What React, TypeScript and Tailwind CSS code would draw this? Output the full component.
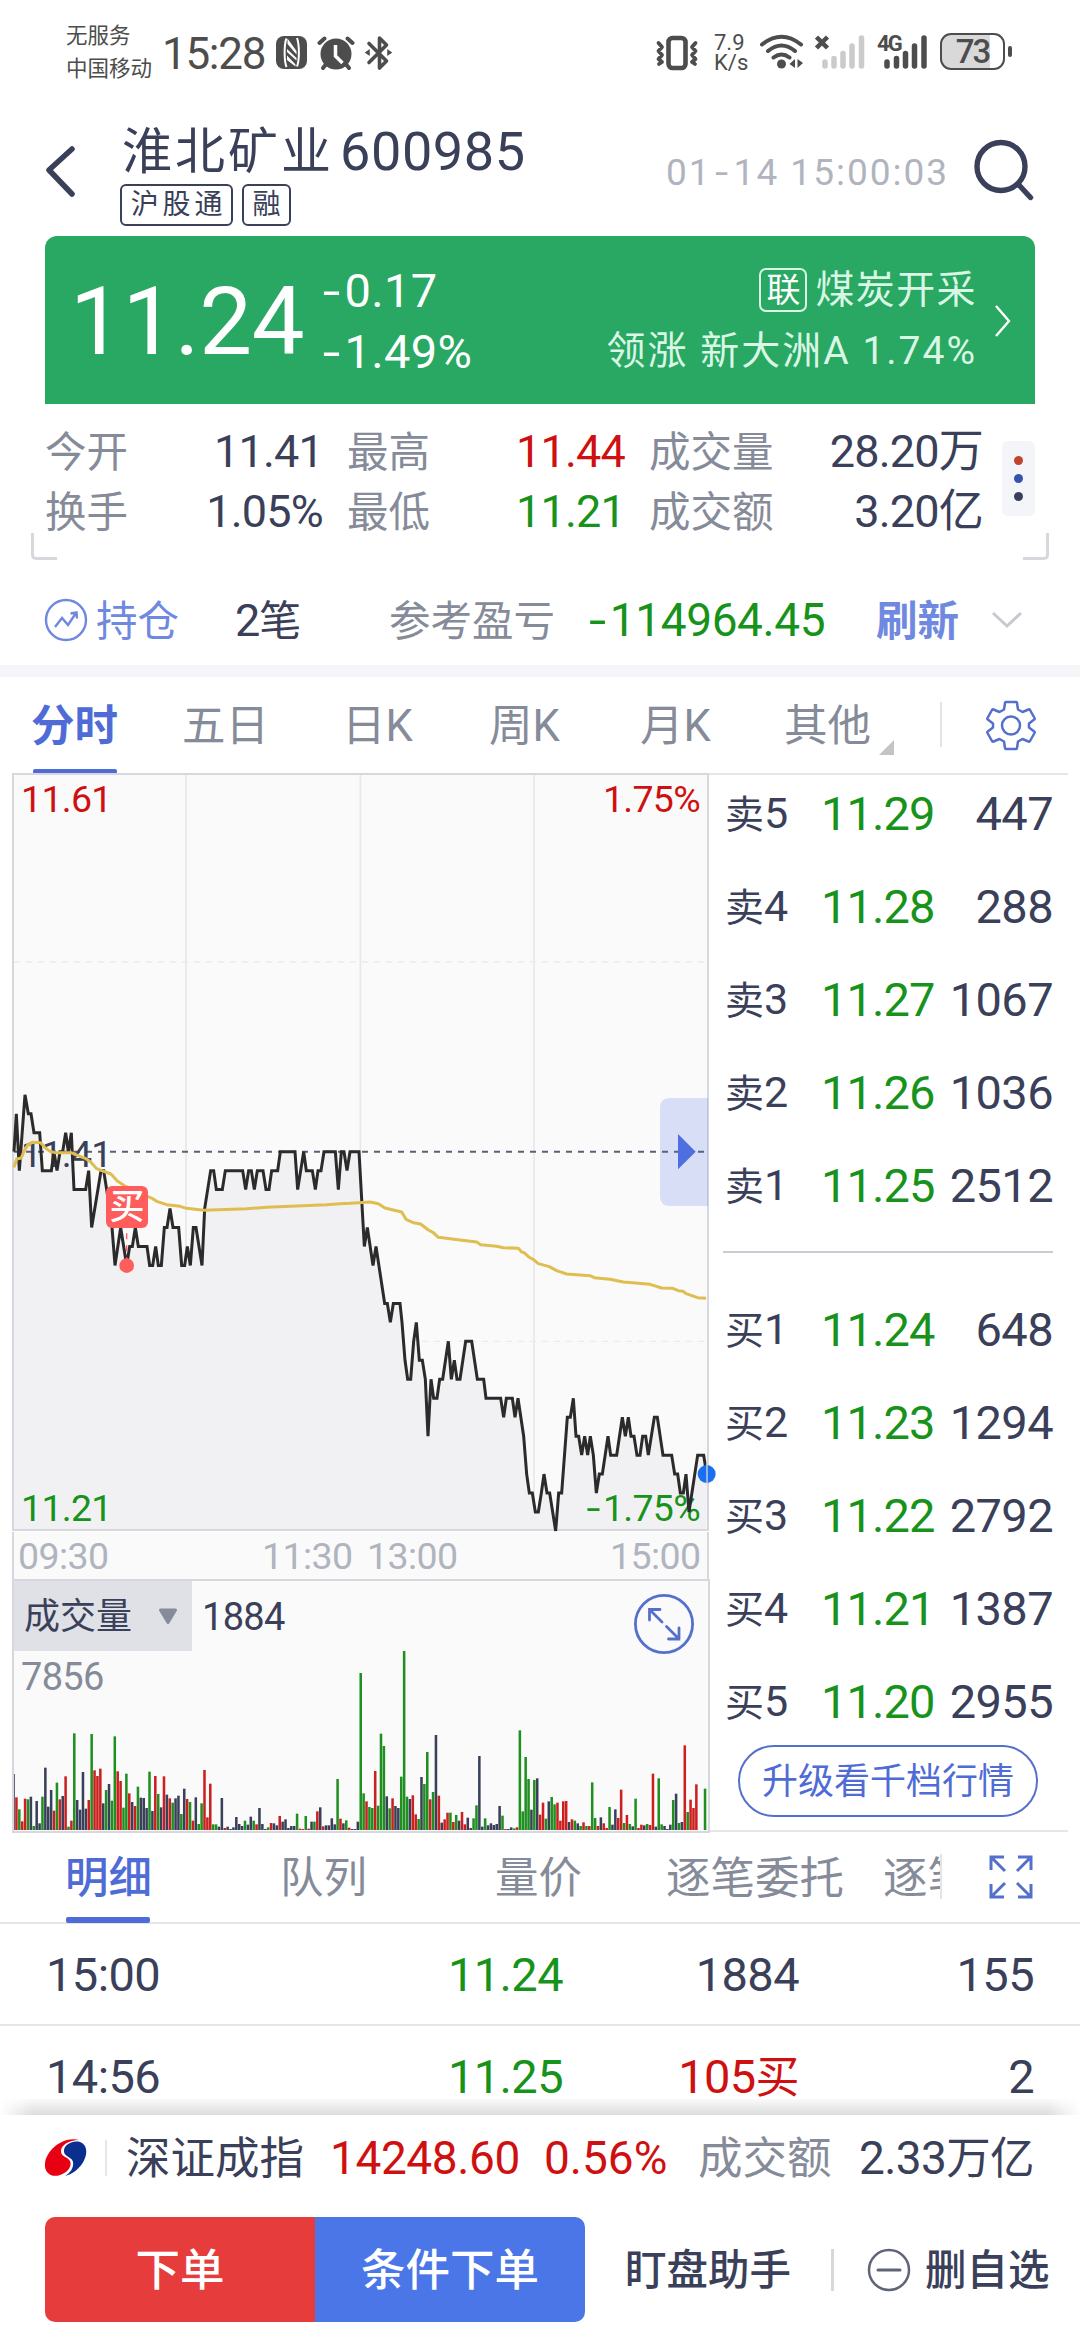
import type { ReactNode } from 'react';
import clsx from 'clsx';

const MORNING: [number, number][] = [
  [42, 0], [49, -2], [58, 1], [75, -3], [85, -2], [93, -2], [102, -1], [119, -1], [127, 1], [154, 1], [162, 0], [171, 1],
  [180, 0], [188, 0], [197, -1], [205, 0], [214, -1], [222, 2], [257, 2], [266, 1], [275, 4], [303, 1], [311, 1], [320, 2],
  [336, 4], [345, 6], [362, 4], [380, 6], [389, 5], [397, 5], [406, 4], [415, 5], [441, 5], [449, 6], [458, 6], [467, 5],
  [475, 6], [484, 6], [493, 4], [501, 4], [510, 3], [519, 4], [536, 4], [545, 6], [554, 6], [562, 5], [571, 6], [580, 4],
  [588, 4], [606, 6], [614, 3], [632, 1], [641, 1], [649, 2], [667, 2], [676, 1], [728, 1], [737, 2], [746, 1], [754, 1],
  [763, 2], [772, 1], [789, 1], [798, 2], [807, 2], [815, 1], [833, 1], [841, 0], [885, 0], [893, 2], [911, 0], [919, 1],
  [937, 1], [946, 2], [954, 1], [963, 1], [972, 0], [1006, 0], [1015, 2], [1024, 0], [1032, 0], [1041, 1], [1050, 0],
];

const AFTERNOON: [number, number][] = [
  [27, 0], [43, 5], [52, 4], [69, 6], [78, 5], [104, 8], [112, 8], [121, 9], [130, 8], [150, 8], [156, 9], [165, 11],
  [173, 12], [182, 12], [191, 10], [199, 9], [208, 11], [217, 11], [226, 12], [234, 15], [243, 12], [251, 13], [261, 13],
  [269, 12], [278, 12], [295, 10], [304, 12], [313, 11], [321, 12], [330, 12], [347, 10], [365, 10], [382, 12], [401, 12],
  [408, 13], [452, 13], [461, 14], [469, 13], [487, 13], [495, 14], [504, 13], [521, 15], [530, 17], [538, 18], [547, 18],
  [556, 19], [565, 19], [574, 18], [582, 17], [591, 18], [599, 18], [617, 20], [626, 18], [635, 18], [652, 14], [661, 14],
  [670, 13], [678, 15], [686, 15], [695, 16], [704, 15], [713, 16], [721, 15], [730, 16], [739, 18], [748, 17], [757, 17],
  [774, 15], [782, 16], [800, 16], [817, 14], [826, 15], [835, 14], [843, 15], [852, 15], [861, 16], [870, 16], [878, 15],
  [887, 15], [895, 16], [913, 14], [922, 14], [939, 16], [965, 16], [974, 17], [983, 17], [991, 18], [1000, 18],
  [1008, 17], [1017, 19], [1043, 16], [1061, 16], [1070, 17],
];

const AVG_MORNING: [number, number][] = [
  [42, 262], [50, 237], [64, 234], [72, 213], [84, 194], [98, 187], [122, 188], [134, 202], [150, 214], [165, 218],
  [213, 218], [240, 229], [258, 236], [272, 246], [290, 266], [305, 272], [333, 282], [352, 303], [378, 320], [440, 348],
  [458, 356], [470, 364], [500, 374], [540, 379], [560, 385], [612, 391], [740, 386], [800, 382], [980, 374], [1020, 371],
];

const AVG_AFTERNOON: [number, number][] = [
  [0, 220], [27, 218], [60, 216], [85, 221], [105, 234], [155, 246], [168, 268], [190, 278], [212, 282], [235, 300],
  [250, 308], [265, 322], [330, 330], [380, 336], [392, 344], [440, 349], [460, 353], [505, 355], [515, 366], [522, 368],
  [538, 382], [548, 387], [565, 401], [598, 410], [620, 422], [650, 432], [720, 437], [733, 443], [780, 448], [820, 456],
  [900, 463], [935, 474], [968, 475], [985, 482], [1000, 484], [1008, 491], [1043, 503], [1068, 505],
];

// one token per minute: r = up, g = down, d = flat
const VOLUME = (
  'd168 r98 g62 r26 r94 g92 d100 g12 d87 d20 g100 d187 d70 d120 r58 g142 r92 d102 r161 g10 r28 g290 d90 d61 d174 d64 r90 ' +
  'g288 r179 r162 r184 d80 g120 d138 g88 g281 r176 r147 g67 g169 r110 d84 r72 g130 d97 d96 d66 g175 d57 r162 g108 d68 r161 ' +
  'd106 r95 g82 d95 d103 g48 d124 r93 g84 r28 d98 g18 g80 r180 r38 r139 g17 g17 d10 d96 r6 d10 d3 d8 d39 d18 d12 g28 d16 ' +
  'd40 g28 r17 d66 d18 d3 g8 r21 d20 d14 r42 d25 d32 d6 d12 d12 g49 r4 r3 g42 r4 d25 g25 r56 d68 r11 d14 d14 d35 d17 g153 ' +
  'r34 d20 g29 r7 d3 d3 d25 g471 g110 r86 g69 g66 r177 g73 g289 g252 d101 g65 r95 d72 d66 g160 g537 g100 d93 r104 r47 g33 ' +
  'd159 g138 g234 r92 g114 d285 r103 d22 r32 r52 g52 r24 g45 d28 r54 r17 d37 d6 g35 g74 d222 d10 g35 d14 d20 d15 d18 d72 ' +
  'g43 r3 d3 d8 g5 r8 g299 g56 g219 g153 d61 g150 d155 r46 r82 g34 d86 g99 g77 r82 r28 r86 r87 d24 r32 g28 d20 g12 r23 g12 ' +
  'r12 g143 g36 r12 d38 r20 r6 g69 d16 d62 r36 r121 g21 r45 g18 d11 g94 r6 r16 d14 g18 r15 r169 d10 g155 g17 d12 d3 d16 ' +
  'g90 d109 g21 d24 r254 g54 r91 r66 r137 d0 d0 g124'
).split(' ');

const BAR_COLORS: Record<string, string> = { r: '#cc1f1f', g: '#1f8f1f', d: '#3a4059' };

const tickY = (t: number) => 3455 + 56.9 * t;
const pricePath = [
  ...MORNING.map(([x, t]) => `${x},${tickY(t)}`),
  ...AFTERNOON.map(([x, t]) => `${x + 1050},${tickY(t)}`),
].join(' ');
const avgPath = [
  ...AVG_MORNING.map(([x, y]) => `${x},${y + 3240}`),
  ...AVG_AFTERNOON.map(([x, y]) => `${x + 1050},${y + 3390}`),
].join(' ');

const SELLS = [
  ['卖5', '11.29', '447'],
  ['卖4', '11.28', '288'],
  ['卖3', '11.27', '1067'],
  ['卖2', '11.26', '1036'],
  ['卖1', '11.25', '2512'],
];
const BUYS = [
  ['买1', '11.24', '648'],
  ['买2', '11.23', '1294'],
  ['买3', '11.22', '2792'],
  ['买4', '11.21', '1387'],
  ['买5', '11.20', '2955'],
];

const Minus = () => <span className="inline-block w-[0.54em] scale-x-[1.35] text-center">-</span>;

const StatusBar = () => (
  <div className="h-[104px] shrink-0 flex items-start text-[#4d4d4d] pl-[66px]">
    <div className="w-[96px] pt-[19px] text-[21.5px] leading-[33px] whitespace-nowrap">
      <div>无服务</div>
      <div>中国移动</div>
    </div>
    <div className="w-[114px] pt-[32px] text-[44px] leading-[44px] tracking-[-1.3px]">15:28</div>
    <svg className="mt-[36px] w-[31px] h-[33px]" viewBox="0 0 31 33">
      <rect x="0" y="0" width="31" height="33" rx="8" fill="#4d4d4d" />
      <path d="M10.500 2.500C8 8 8 25 10.500 31M21 2C23.500 9 23.500 24 21 30.500" stroke="#fff" strokeWidth="2" fill="none" />
      <path d="M11.500 2.500L20.500 15v3.500L11.500 8zM11 13l9.500 9v2.500L11 16zM11 19.500l8.500 9v2L11 24z" fill="#fff" />
    </svg>
    <svg className="mt-[35px] ml-[10px] w-[38px] h-[36px]" viewBox="0 0 38 36">
      <circle cx="19" cy="19" r="15.500" fill="#4d4d4d" />
      <path d="M2.500 8l5-4.500M35.500 8l-5-4.500M6 33l4-5M32 33l-4-5" stroke="#4d4d4d" strokeWidth="4" strokeLinecap="round" />
      <path d="M18.500 10v11l7 7" stroke="#fff" strokeWidth="3.500" fill="none" />
    </svg>
    <svg className="mt-[35px] ml-[10px] w-[28px] h-[36px]" viewBox="0 0 28 36" fill="none" stroke="#4d4d4d" strokeWidth="3.600">
      <path d="M4 8.500L21.500 26l-7 7V3l7 7L4 27.500" strokeLinejoin="round" strokeLinecap="round" />
      <path d="M1 17.500l3-2v4zM26 17.500l-3-2v4z" strokeWidth="1.500" fill="#4d4d4d" />
    </svg>
    <svg className="mt-[34px] ml-[262px] w-[44px] h-[38px]" viewBox="0 0 44 38" fill="none" stroke="#4d4d4d">
      <rect x="13.500" y="4" width="17" height="30" rx="4" strokeWidth="4.600" />
      <path d="M3.500 9l3.500 4-3.500 4 3.500 4-3.500 4 3.500 3-3 2M40.500 9L37 13l3.500 4-3.500 4 3.500 4-3.500 3 3 2" strokeWidth="3.800" strokeLinejoin="round" strokeLinecap="round" />
    </svg>
    <div className="ml-[15px] w-[45px] pt-[33px] text-[22px] leading-[20px] tracking-[0px]">
      <div>7.9</div>
      <div>K/s</div>
    </div>
    <svg className="mt-[34px] w-[46px] h-[37px]" viewBox="0 0 46 37" fill="none" stroke="#4d4d4d" strokeWidth="4" strokeLinecap="round">
      <path d="M3 10.500Q22.500-5 42 10.500M9 17Q22.500 6 36 17M14.500 23.500Q22.500 17.500 30.500 23.500" />
      <circle cx="22.500" cy="30" r="4.500" fill="#4d4d4d" stroke="none" />
      <path d="M36 25v9l-5.500-4zM38.500 25v9l5.500-5z" fill="#4d4d4d" stroke="none" />
    </svg>
    <svg className="mt-[33px] ml-[10px] w-[50px] h-[36px]" viewBox="0 0 50 36" strokeLinecap="round">
      <path d="M1.500 4l11 11M12.500 4l-11 11" stroke="#4d4d4d" strokeWidth="4.500" strokeLinecap="butt" />
      <path d="M10 29v4M19 25.500v7.500M28 20.500v12.500M37 13v20M46.500 5v28" stroke="#cbcbcb" strokeWidth="5.500" />
    </svg>
    <div className="relative ml-[12px]">
      <svg className="mt-[33px] w-[52px] h-[36px]" viewBox="0 0 52 36" strokeLinecap="round">
        <path d="M10 29v4M19.500 25.500v7.500M28.500 20.500v12.500M37.500 13v20M47 5v28" stroke="#4d4d4d" strokeWidth="5.500" />
      </svg>
      <span className="absolute left-0 top-[33px] text-[22px] leading-[22px] font-bold tracking-[-1.8px]">4G</span>
    </div>
    <div className="relative mt-[33px] ml-[11px] w-[65px] h-[37px] rounded-[11px] border-[2.5px] border-[#4d4d4d] bg-linear-to-r from-[#d9d9d9] from-78% to-white to-78% flex items-center justify-center text-[33px] leading-none tracking-[-2px] font-medium">
      73
      <span className="absolute -right-[9px] top-[11px] w-[4px] h-[11px] rounded-full bg-[#4d4d4d]" />
    </div>
  </div>
);

const TitleBar = () => (
  <div className="h-[132px] shrink-0 flex items-start text-[#3a4059]">
    <svg className="mt-[36px] ml-[42px] w-[36px] h-[60px]" viewBox="0 0 36 60" fill="none" stroke="#3a4059" strokeWidth="5.500" strokeLinecap="round" strokeLinejoin="round">
      <path d="M30 9L7 30l23 24" />
    </svg>
    <div className="ml-[42px] w-[546px]">
      <div className="mt-[16px] h-[64px] flex items-center whitespace-nowrap leading-none">
        <span className="ml-[2px] w-[218px] text-[50px] tracking-[3px]">淮北矿业</span>
        <span className="text-[54px] tracking-[0.6px]">600985</span>
      </div>
      <div className="flex gap-[9px] text-[28px] leading-none">
        <span className="w-[113px] h-[42px] border-2 border-[#3a4059] rounded-[6px] flex items-center justify-center tracking-[3.8px] pl-[4px]">沪股通</span>
        <span className="w-[49px] h-[42px] border-2 border-[#3a4059] rounded-[6px] flex items-center justify-center">融</span>
      </div>
    </div>
    <div className="mt-[49px] w-[307px] text-[37px] leading-[40px] tracking-[2px] text-[#b0b4be] whitespace-nowrap">
      01<span className="inline-block w-[22px] scale-x-[1.3] text-center">-</span>14 15:00:03
    </div>
    <svg className="mt-[34px] -ml-[1px] w-[66px] h-[66px]" viewBox="0 0 66 66" fill="none" stroke="#3a4059" strokeWidth="5.400" strokeLinecap="round">
      <circle cx="29" cy="28.500" r="24" />
      <path d="M46.500 46.500L58.500 59.500" />
    </svg>
  </div>
);

const QuoteBanner = () => (
  <div className="mx-[45px] h-[168px] shrink-0 rounded-t-[12px] bg-[#28a862] text-white flex leading-none whitespace-nowrap">
    <div className="pl-[25px] w-[274px] pt-[39px] text-[94px] tracking-[-0.4px]">11.24</div>
    <div className="flex-1 pt-[31px] text-[47px] tracking-[0.4px]">
      <div><Minus />0.17</div>
      <div className="mt-[14px]"><Minus />1.49%</div>
    </div>
    <div className="w-[390px] pt-[32px] text-[#daf6e5] text-[39px]">
      <div className="flex items-center justify-end h-[44px] tracking-[1.4px]">
        <span className="w-[48px] h-[44px] mr-[8px] border-2 border-[#daf6e5] rounded-[7px] flex items-center justify-center text-[34px] tracking-normal text-white">联</span>
        煤炭开采
      </div>
      <div className="mt-[20px] text-right tracking-[2px]">领涨 新大洲A 1.74%</div>
    </div>
    <svg className="mt-[67px] ml-[16px] mr-[22px] w-[20px] h-[36px]" viewBox="0 0 20 36" fill="none" stroke="#fff" strokeWidth="2.400">
      <path d="M3 3l13 15L3 33" />
    </svg>
  </div>
);

const Stat = ({ label, value, w, color = 'text-[#3a4059]' }: { label: string; value: string; w: string; color?: string }) => (
  <div className={clsx('flex items-center justify-between', w)}>
    <span className="pt-[3px] text-[41.5px] text-[#868b99]">{label}</span>
    <span className={clsx('text-[45px] tracking-[-0.8px]', color)}>{value}</span>
  </div>
);

const Stats = () => (
  <div className="h-[156px] shrink-0 pt-[17px] pl-[45px] flex leading-none whitespace-nowrap">
    <div>
      <div className="flex h-[60px] gap-[24px]">
        <Stat label="今开" value="11.41" w="w-[278px]" />
        <Stat label="最高" value="11.44" w="w-[278px]" color="text-[#cf1010]" />
        <Stat label="成交量" value="28.20万" w="w-[334px]" />
      </div>
      <div className="flex h-[60px] gap-[24px]">
        <Stat label="换手" value="1.05%" w="w-[278px]" />
        <Stat label="最低" value="11.21" w="w-[278px]" color="text-[#17931b]" />
        <Stat label="成交额" value="3.20亿" w="w-[334px]" />
      </div>
    </div>
    <div className="ml-[19px] mt-[20px] w-[33px] h-[75px] rounded-[6px] bg-[#f4f5f8] flex flex-col items-center justify-center gap-[9px]">
      <span className="size-[9px] rounded-full bg-[#c2432f]" />
      <span className="size-[9px] rounded-full bg-[#3552ac]" />
      <span className="size-[9px] rounded-full bg-[#3a4059]" />
    </div>
  </div>
);

const Holdings = () => (
  <div className="h-[105px] shrink-0 flex items-start leading-none whitespace-nowrap">
    <div className="mt-[36px] ml-[44px] h-[48px] w-full flex items-center">
      <svg className="size-[44px]" viewBox="0 0 44 44" fill="none" stroke="#7089e0" strokeWidth="2.400">
        <circle cx="22" cy="22" r="20" />
        <path d="M11 29l7-9 6 7 8-12M26.500 15.500l6-1 .500 6" />
      </svg>
      <span className="ml-[8px] w-[139px] pt-[3px] text-[41.5px] text-[#7089e0]">持仓</span>
      <span className="w-[154px] text-[45px] tracking-[-1px] text-[#3a4059]">2<span className="text-[42px]">笔</span></span>
      <span className="w-[196px] pt-[3px] text-[41.5px] text-[#868b99]">参考盈亏</span>
      <span className="w-[291px] text-[46px] tracking-[-0.4px] text-[#17931b]"><Minus />114964.45</span>
      <span className="w-[114px] pt-[3px] text-[41.5px] font-bold text-[#7089e0]">刷新</span>
      <svg className="w-[34px] h-[20px]" viewBox="0 0 34 20" fill="none" stroke="#c6c9d1" strokeWidth="3">
        <path d="M3 3l14 13L31 3" />
      </svg>
    </div>
  </div>
);

const PeriodTabs = () => (
  <div className="h-[97px] shrink-0 flex items-start leading-none whitespace-nowrap text-[43.5px] text-[#868b99]">
    <div className="ml-[31px] w-[151px] h-[97px] pt-[28px] font-bold text-[#4f6cd6]">
      分时
      <div className="mt-[20px] ml-[2px] w-[84px] h-[5px] rounded-[2px] bg-[#4f6cd6]" />
    </div>
    <div className="w-[160px] pt-[28px]">五日</div>
    <div className="w-[147px] pt-[28px]">日K</div>
    <div className="w-[151px] pt-[28px]">周K</div>
    <div className="w-[144px] pt-[28px]">月K</div>
    <div className="w-[95px] pt-[28px]">其他</div>
    <svg className="mt-[63px] w-[15px] h-[15px]" viewBox="0 0 15 15">
      <path d="M15 0v15H0z" fill="#c4c4c4" />
    </svg>
    <div className="mt-[25px] ml-[46px] w-[2px] h-[45px] bg-[#e4e4e7]" />
    <svg className="mt-[22px] ml-[43px] size-[52px]" viewBox="0 0 52 52" fill="none" stroke="#5570cc" strokeWidth="2.500" strokeLinejoin="round">
      <path d="M20 4Q20 3 21 3h10q1 0 1 1l1 6.500 4.500 2.500 6-2.500q1-.4 1.500.5l4.500 8q.5 1-.3 1.600L44 24.500v4l5.200 3.900q.8.600.3 1.600l-4.500 8q-.5.900-1.500.5l-6-2.500-4.500 2.500-1 6.500q0 1-1 1H21q-1 0-1-1l-1-6.500-4.500-2.500-6 2.500q-1 .4-1.500-.5l-4.500-8q-.5-1 .3-1.600L8 28.500v-4l-5.200-3.900q-.8-.6-.3-1.600l4.500-8q.5-.9 1.500-.5l6 2.500 4.500-2.500z" />
      <circle cx="26" cy="26.500" r="9" />
    </svg>
  </div>
);

const PriceChart = () => (
  <div className="relative w-[698px] h-[759px] text-[37.5px] leading-none tracking-[-0.7px]">
    <svg className="w-[708px] h-[759px] overflow-visible" viewBox="36 2319 2124 2277">
      <rect x="39" y="2322" width="2088" height="2271" fill="#fafafa" />
      <path d="M558 2322V4590M1081 2322V4590M1602 2322V4590" stroke="#e8e8e9" strokeWidth="5" />
      <path d="M42 2886H2124M42 4024H2124" stroke="#ececec" strokeWidth="4" strokeDasharray="18 18" />
      <polygon points={`42,4590 ${pricePath} 2120,4590`} fill="#f1f1f3" />
      <path d="M42 3455H2124" stroke="#5a6077" strokeWidth="6" strokeDasharray="18 18" />
      <rect x="39" y="2322" width="2085" height="2268" fill="none" stroke="#d7d8dd" strokeWidth="6" />
    </svg>
    <span className="absolute left-[9px] top-[8px] text-[#cf1010]">11.61</span>
    <span className="absolute right-[10px] top-[8px] text-[#cf1010]">1.75%</span>
    <span className="absolute left-[9px] top-[363px] text-[#3a4059]">11.41</span>
    <span className="absolute left-[9px] top-[717px] text-[#17931b]">11.21</span>
    <span className="absolute right-[10px] top-[717px] text-[#17931b]"><Minus />1.75%</span>
    <svg className="absolute left-0 top-0 w-[708px] h-[759px] overflow-visible" viewBox="36 2319 2124 2277" fill="none">
      <polyline points={pricePath} stroke="#2b2b2b" strokeWidth="9" />
      <polyline points={avgPath} stroke="#dfbd50" strokeWidth="9" strokeLinejoin="round" />
      <path d="M380 3700V3780" stroke="#ff5c5c" strokeWidth="4" strokeDasharray="18 18" />
      <circle cx="380" cy="3797" r="22" fill="#ff5c5c" />
      <circle cx="2120" cy="4422" r="27" fill="#1a6ff0" />
      <path d="M2121 4390V4455" stroke="#d7d8dd" strokeWidth="4" />
      <path d="M2124 3294H2010q-30 0-30 30V3588q0 30 30 30H2124z" fill="#4f6fe6" fillOpacity="0.2" />
      <path d="M2034 3402l53 53-53 53z" fill="#4f6fe0" />
    </svg>
    <span className="absolute left-[94px] top-[413px] w-[42px] h-[42px] rounded-[6px] bg-[#ff5c5c] text-white text-[35px] font-medium tracking-normal flex items-center justify-center">买</span>
  </div>
);

const VolumeChart = () => (
  <div className="relative w-[698px] h-[254px] border-2 border-[#d7d8dd] bg-[#fafafa] leading-none">
    <div className="flex items-center h-[70px]">
      <div className="w-[178px] h-[70px] bg-[#e0e1e6] flex items-center text-[36px] text-[#3a4059]">
        <span className="ml-[10px] w-[134px] pt-[2px]">成交量</span>
        <svg className="w-[20px] h-[17px]" viewBox="0 0 20 17">
          <path d="M2.500 2h15L10 14.500z" fill="#868b99" stroke="#868b99" strokeWidth="3" strokeLinejoin="round" />
        </svg>
      </div>
      <span className="ml-[10px] pt-[2px] text-[38px] tracking-[-0.7px] text-[#3a4059]">1884</span>
    </div>
    <div className="mt-[7px] ml-[7px] text-[38px] tracking-[-0.7px] text-[#868b99]">7856</div>
    <svg className="absolute -left-[2px] -top-[2px] w-[698px] h-[254px]" viewBox="36 27 2094 762">
      {VOLUME.map((bar, i) => {
        const h = Number(bar.slice(1));
        return <rect key={i} x={36.8 + 8.68 * i} y={780 - h} width="7.6" height={h} fill={BAR_COLORS[bar[0]]} />;
      })}
      <path d="M39 27V789M2127 27V789" stroke="#d7d8dd" strokeWidth="6" />
    </svg>
    <svg className="absolute left-[620px] top-[13px] size-[60px]" viewBox="0 0 60 60" fill="none" stroke="#5570cc" strokeWidth="2.800" strokeLinecap="round">
      <circle cx="30" cy="30" r="28.600" />
      <path d="M28 28L15.500 15.500M15.500 26V15.500H26M32.500 32.500L45 45M45 34v11H34.500" />
    </svg>
  </div>
);

const BookRow = ({ row }: { row: string[] }) => (
  <div className="h-[93.1px] pl-[2px] flex items-center leading-none text-[#3a4059] whitespace-nowrap">
    <span className="w-[96px] text-[43px]"><span className="text-[39px]">{row[0][0]}</span>{row[0][1]}</span>
    <span className="w-[112px] text-[47px] tracking-[-0.9px] text-[#17931b]">{row[1]}</span>
    <span className="w-[120px] text-right text-[47px] tracking-[-0.6px]">{row[2]}</span>
  </div>
);

const OrderBook = () => (
  <div className="w-[360px] border-t-2 border-[#e6e6e9] pl-[15px]">
    <div className="-mt-[8px]">
      {SELLS.map((r) => <BookRow key={r[0]} row={r} />)}
    </div>
    <div className="mt-[19px] w-[330px] h-[2px] bg-[#c9cbd3]" />
    <div className="mt-[29px]">
      {BUYS.map((r) => <BookRow key={r[0]} row={r} />)}
    </div>
    <div className="-mt-[3px] ml-[15px] w-[300px] h-[72px] rounded-full border-2 border-[#5570cc] text-[#4f6cd6] text-[36px] leading-none flex items-center justify-center pt-[2px]">升级看千档行情</div>
  </div>
);

const DetailTabs = () => (
  <div className="h-[92px] shrink-0 border-b-2 border-[#e6e6e9] flex items-start leading-none whitespace-nowrap text-[43.5px] text-[#868b99]">
    <div className="ml-[65px] w-[215px] pt-[25px] font-medium text-[#4f6cd6]">
      明细
      <div className="mt-[16px] ml-px w-[84px] h-[6px] rounded-[2px] bg-[#4f6cd6]" />
    </div>
    <div className="w-[215px] pt-[25px]">队列</div>
    <div className="w-[171px] pt-[25px]">量价</div>
    <div className="w-[217px] pt-[25px] text-[44.5px]">逐笔委托</div>
    <div className="w-[57px] pt-[25px] text-[44.5px] overflow-hidden">逐笔</div>
    <div className="mt-[22px] w-[2px] h-[45px] bg-[#e4e4e7]" />
    <svg className="mt-[23px] ml-[47px] size-[44px]" viewBox="0 0 44 44" fill="none" stroke="#5570cc" strokeWidth="3">
      <path d="M2 15V2h13M2 2l14 14M29 2h13v13M42 2L28 16M2 29v13h13M2 42l14-14M42 29v13H29M42 42L28 28" />
    </svg>
  </div>
);

const TradeRow = ({ time, price, vol, count }: { time: string; price: string; vol: ReactNode; count: string }) => (
  <div className="h-[102px] shrink-0 border-b-2 border-[#e6e6e9] flex items-center leading-none text-[47px] tracking-[-0.6px] text-[#3a4059] whitespace-nowrap">
    <span className="ml-[46px] w-[315px]">{time}</span>
    <span className="w-[202px] text-right text-[#17931b]">{price}</span>
    <span className="w-[236px] text-right">{vol}</span>
    <span className="w-[235px] text-right">{count}</span>
  </div>
);

const Footer = () => (
  <div className="absolute left-0 right-0 bottom-0 h-[225px] bg-white leading-none whitespace-nowrap text-[#3a4059]">
    <div className="absolute left-0 right-0 -top-[16px] h-[16px] bg-linear-to-t from-[#dcdcdc] to-[#f8f8f8]/60 mask-x-from-97% mask-x-to-100%" />
    <div className="h-[86px] flex items-center">
      <svg className="ml-[44px] w-[44px] h-[42px]" viewBox="0 0 44 42">
        <path d="M35 3C18-1 2 14 1 27c-1 9 7 14 15 11 9-3 12-10 10-14-3-5-9-4-9-10C17 8 25 3 35 3z" fill="#e60012" />
        <path d="M36 5c-9-2-17 4-16 10 1 5 8 5 9 10 1 6-3 11-8 14C34 36 44 22 42 12c-.8-4-3-6-6-7z" fill="#0a2f8f" />
      </svg>
      <div className="ml-[17px] w-[2px] h-[36px] bg-[#e6e6e9]" />
      <span className="ml-[19px] w-[204px] pt-[2px] text-[44.5px]">深证成指</span>
      <span className="w-[214px] text-[46px] tracking-[-0.4px] text-[#cf1010]">14248.60</span>
      <span className="w-[154px] text-[46px] text-[#cf1010]">0.56%</span>
      <span className="w-[136px] pt-[2px] text-[44.5px] text-[#868b99]">成交额</span>
      <span className="w-[200px] text-right text-[46px] tracking-[-0.6px]">2.33<span className="text-[44.5px]">万亿</span></span>
    </div>
    <div className="mt-[16px] h-[105px] flex items-center">
      <button className="ml-[45px] w-[270px] h-[105px] pt-[4px] rounded-l-[10px] bg-[#e63c3b] text-white text-[44.5px] font-medium">下单</button>
      <button className="w-[270px] h-[105px] pt-[4px] rounded-r-[10px] bg-[#4a76e8] text-white text-[44.5px] font-medium">条件下单</button>
      <span className="ml-[40px] w-[206px] pt-[3px] text-[41.5px] font-medium">盯盘助手</span>
      <div className="w-[3px] h-[42px] bg-[#d7d8dd]" />
      <svg className="ml-[33px] size-[44px]" viewBox="0 0 44 44" fill="none" stroke="#5f6478" strokeWidth="2.500" strokeLinecap="round">
        <circle cx="22" cy="22" r="20" />
        <path d="M11 22h22" strokeWidth="3" />
      </svg>
      <span className="ml-[14px] pt-[3px] text-[41.5px] font-medium">删自选</span>
    </div>
  </div>
);

export default function App() {
  return (
    <div className="relative w-[1080px] h-[2340px] overflow-hidden bg-white flex flex-col font-['Roboto','Noto_Sans_CJK_SC',sans-serif]">
      <StatusBar />
      <TitleBar />
      <QuoteBanner />
      <Stats />
      <div className="mx-[31px] -mt-[27px] h-[27px] shrink-0 flex justify-between">
        <span className="w-[26px] border-l-[3px] border-b-[3px] border-[#d7d8dd] rounded-bl-[5px]" />
        <span className="w-[26px] border-r-[3px] border-b-[3px] border-[#d7d8dd] rounded-br-[5px]" />
      </div>
      <Holdings />
      <div className="h-[12px] shrink-0 bg-[#f5f6f9]" />
      <div className="h-[96px] shrink-0"><PeriodTabs /></div>
      <div className="ml-[12px] h-[1057px] shrink-0 flex">
        <div className="w-[696px]">
          <PriceChart />
          <div className="w-[697px] h-[47px] pt-[2px] border-x-2 border-[#d7d8dd] bg-[#fafafa] flex items-center leading-none text-[37.500px] tracking-[-0.6px] text-[#b0b4be]">
            <span className="ml-[4px] w-[244px]">09:30</span>
            <span className="w-[105px]">11:30</span>
            <span className="w-[243px]">13:00</span>
            <span>15:00</span>
          </div>
          <VolumeChart />
        </div>
        <OrderBook />
      </div>
      <div className="ml-[12px] mr-[12px] h-[2px] shrink-0 bg-[#e6e6e9]" />
      <DetailTabs />
      <TradeRow time="15:00" price="11.24" vol="1884" count="155" />
      <TradeRow time="14:56" price="11.25" vol={<span className="text-[#cf1010]">105<span className="text-[44px]">买</span></span>} count="2" />
      <Footer />
    </div>
  );
}
